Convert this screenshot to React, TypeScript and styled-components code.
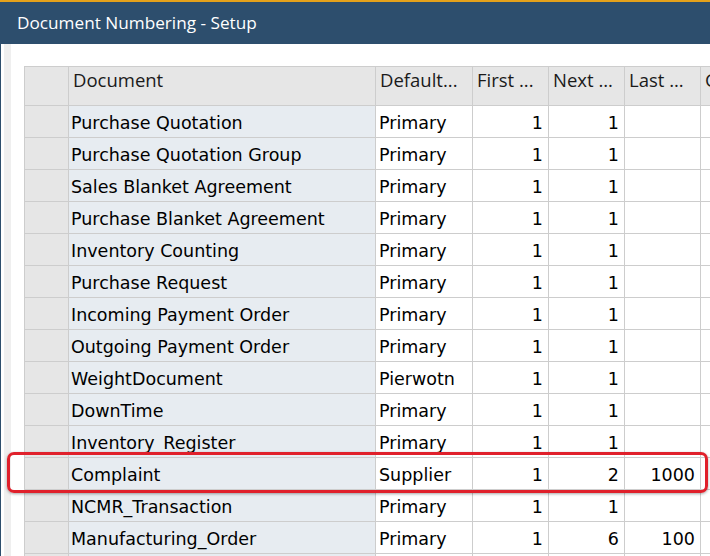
import React from 'react';
import styled, { createGlobalStyle } from 'styled-components';

interface Row {
  name: string;
  series: string;
  first: string;
  next: string;
  last: string;
}

const rows: Row[] = [
  { name: 'Purchase Quotation', series: 'Primary', first: '1', next: '1', last: '' },
  { name: 'Purchase Quotation Group', series: 'Primary', first: '1', next: '1', last: '' },
  { name: 'Sales Blanket Agreement', series: 'Primary', first: '1', next: '1', last: '' },
  { name: 'Purchase Blanket Agreement', series: 'Primary', first: '1', next: '1', last: '' },
  { name: 'Inventory Counting', series: 'Primary', first: '1', next: '1', last: '' },
  { name: 'Purchase Request', series: 'Primary', first: '1', next: '1', last: '' },
  { name: 'Incoming Payment Order', series: 'Primary', first: '1', next: '1', last: '' },
  { name: 'Outgoing Payment Order', series: 'Primary', first: '1', next: '1', last: '' },
  { name: 'WeightDocument', series: 'Pierwotn', first: '1', next: '1', last: '' },
  { name: 'DownTime', series: 'Primary', first: '1', next: '1', last: '' },
  { name: 'Inventory_Register', series: 'Primary', first: '1', next: '1', last: '' },
  { name: 'Complaint', series: 'Supplier', first: '1', next: '2', last: '1000' },
  { name: 'NCMR_Transaction', series: 'Primary', first: '1', next: '1', last: '' },
  { name: 'Manufacturing_Order', series: 'Primary', first: '1', next: '6', last: '100' },
  { name: '', series: '', first: '', next: '', last: '' },
];

const GlobalStyle = createGlobalStyle`
  html, body {
    margin: 0;
    padding: 0;
    background: #fff;
  }
  body {
    width: 710px;
    height: 556px;
    overflow: hidden;
  }
`;

const Window = styled.div`
  width: 710px;
  height: 556px;
  overflow: hidden;
  display: flex;
  flex-direction: column;
  border-top: 2px solid #e4a11b;
  box-sizing: border-box;
`;

const TitleBar = styled.div`
  height: 42px;
  flex: none;
  background: #2d4e6d;
  color: #fff;
  font-family: 'Open Sans', 'Noto Sans', sans-serif;
  font-size: 17.2px;
  display: flex;
  align-items: center;
  padding-left: 17px;
  padding-bottom: 1px;
  box-sizing: border-box;
`;

const Body = styled.div`
  position: relative;
  flex: 1;
  display: flex;
  border-left: 1px solid #2d4e6d;
  min-height: 0;
`;

const Rail = styled.div`
  width: 7px;
  margin-left: 3px;
  background: #efefef;
  flex: none;
`;

const Main = styled.div`
  padding: 22px 0 0 13px;
  flex: 1;
  overflow: hidden;
`;

const Table = styled.table`
  table-layout: fixed;
  border-collapse: collapse;
  width: 776px;
  font-family: 'DejaVu Sans', Verdana, sans-serif;
  font-size: 17.5px;
  color: #000;
`;

const Head = styled.th`
  height: 38px;
  background: #e6e6e6;
  border: 1px solid #cdcdcd;
  font-family: 'Open Sans', 'Noto Sans', sans-serif;
  font-weight: 400;
  font-size: 18.5px;
  color: #1a1a1a;
  text-align: left;
  vertical-align: top;
  padding: 0 0 0 4px;
  white-space: nowrap;
  overflow: hidden;
`;

const RowHead = styled.td`
  background: #e6e6e6;
  border: 1px solid #cdcdcd;
`;

const Cell = styled.td<{ $tone?: 'blue' | 'white'; $num?: boolean }>`
  height: 32px;
  background: ${(p) => (p.$tone === 'blue' ? '#e7ecf1' : '#fff')};
  border: 1px solid #cdcdcd;
  padding: 2px ${(p) => (p.$num ? '5px' : '0')} 0 ${(p) => (p.$num ? '0' : '2px')};
  text-align: ${(p) => (p.$num ? 'right' : 'left')};
  white-space: nowrap;
  overflow: hidden;
  box-sizing: border-box;
`;

const Highlight = styled.div`
  position: absolute;
  left: 6px;
  top: 408px;
  width: 695px;
  height: 35px;
  border: 3px solid #e0202b;
  border-radius: 7px;
  box-shadow: 0 1px 3px rgba(0, 0, 0, 0.35);
  pointer-events: none;
`;

function App() {
  return (
    <>
      <GlobalStyle />
      <Window>
        <TitleBar>Document Numbering - Setup</TitleBar>
        <Body>
          <Rail />
          <Main>
            <Table>
              <colgroup>
                <col style={{ width: 44 }} />
                <col style={{ width: 307 }} />
                <col style={{ width: 97 }} />
                <col style={{ width: 76 }} />
                <col style={{ width: 76 }} />
                <col style={{ width: 76 }} />
                <col style={{ width: 100 }} />
              </colgroup>
              <thead>
                <tr>
                  <Head />
                  <Head>Document</Head>
                  <Head>Default...</Head>
                  <Head>First ...</Head>
                  <Head>Next ...</Head>
                  <Head>Last ...</Head>
                  <Head>Group</Head>
                </tr>
              </thead>
              <tbody>
                {rows.map((r, i) => (
                  <tr key={i}>
                    <RowHead />
                    <Cell $tone="blue">{r.name}</Cell>
                    <Cell style={{ paddingLeft: 3 }}>{r.series}</Cell>
                    <Cell $num>{r.first}</Cell>
                    <Cell $num>{r.next}</Cell>
                    <Cell $num>{r.last}</Cell>
                    <Cell />
                  </tr>
                ))}
              </tbody>
            </Table>
          </Main>
          <Highlight />
        </Body>
      </Window>
    </>
  );
}

export default App;
